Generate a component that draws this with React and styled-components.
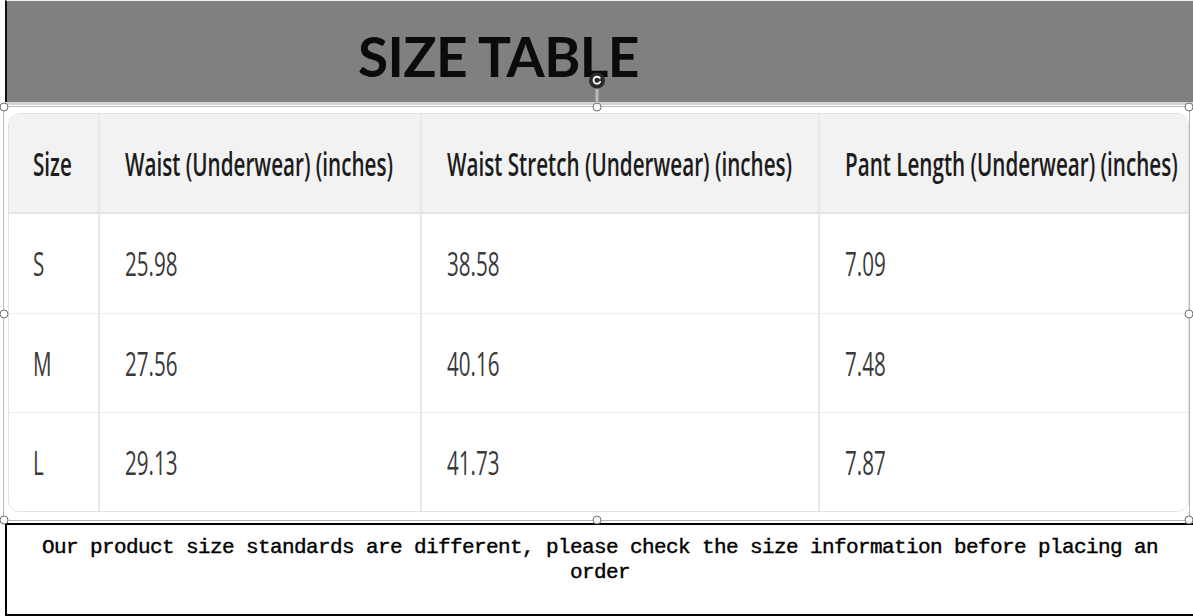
import React from 'react';
import styled, { createGlobalStyle } from 'styled-components';

const GlobalStyle = createGlobalStyle`
    html, body{
        margin: 0;
        padding: 0;
        background: #fff;
    }
    body{
        width: 1193px;
        height: 616px;
        overflow: hidden;
    }
`;

const Sheet = styled.div`
    width: 1193px;
    height: 616px;
    display: flex;
    flex-direction: column;
    background: #fff;
    overflow: hidden;
`;

const TitleBand = styled.div`
    margin-left: 5px;
    height: 102px;
    box-sizing: border-box;
    background: #808080;
    border-left: 2px solid #111;
    border-top: 1px solid #f2f2f2;
    display: flex;
    align-items: center;
    padding: 8px 0 0 351px;

    h1{
        margin: 0;
        font-family: Lato, "Noto Sans", sans-serif;
        font-weight: 700;
        font-size: 55px;
        letter-spacing: -0.6px;
        color: #0b0b0b;
        white-space: nowrap;
    }
`;

const BandEdge = styled.div`
    margin-left: 5px;
    height: 3px;
    background: #d4d4d4;
`;

const Frame = styled.div`
    position: relative;
    margin: 1px 0 0 3px;
    width: 1187px;
    height: 415px;
    box-sizing: border-box;
    border: 1px solid #b8b8b8;
    padding: 6px 0 0 4px;
`;

const Card = styled.div`
    border: 1px solid #e2e2e2;
    border-radius: 12px;
    overflow: hidden;
    background: #fff;
`;

const Row = styled.div`
    display: grid;
    grid-template-columns: 89px 322px 398px 1fr;
    height: ${p => p.$h}px;
    box-sizing: border-box;
    background: ${p => p.$head ? '#f2f2f2' : '#fff'};
    border-bottom: ${p => p.$last ? 'none' : p.$head ? '2px solid #e4e4e4' : '1px solid #ececec'};
`;

const Cell = styled.div`
    display: flex;
    align-items: center;
    padding-left: ${p => p.$first ? 24 : 25}px;
    border-left: ${p => p.$first ? 'none' : '2px solid #e8e8e8'};
    overflow: visible;

    span{
        display: inline-block;
        white-space: nowrap;
        transform: scaleX(0.625);
        transform-origin: left center;
        font-family: "Open Sans", "Liberation Sans", sans-serif;
        font-size: 33px;
        font-weight: ${p => p.$head ? 600 : 400};
        color: ${p => p.$head ? '#1c1c1c' : '#3a3a3a'};
    }
`;

const Handle = styled.span`
    position: absolute;
    left: ${p => p.$x};
    top: ${p => p.$y};
    width: 9px;
    height: 9px;
    box-sizing: border-box;
    border-radius: 50%;
    background: #fff;
    border: 1px solid #6f6f6f;
    transform: translate(-50%, -50%);
`;

const RotateHandle = styled.div`
    position: absolute;
    left: 50%;
    top: -35px;
    transform: translateX(-50%);
    display: flex;
    flex-direction: column;
    align-items: center;

    i{
        display: block;
        width: 3px;
        height: 13px;
        box-sizing: border-box;
        background: #fff;
        border-left: 1px solid #777;
        border-right: 1px solid #777;
    }
`;

const NoteBox = styled.div`
    margin: 2px 0 0 5px;
    height: 93px;
    box-sizing: border-box;
    border: 2px solid #000;
    border-right: none;
    padding: 10px 30px 0;
    text-align: center;
    font-family: "Liberation Mono", monospace;
    font-weight: 400;
    font-size: 21px;
    letter-spacing: -0.6px;
    line-height: 25px;
    color: #000;
    -webkit-text-stroke: 0.4px #000;
`;

const columns = [
    'Size',
    'Waist (Underwear) (inches)',
    'Waist Stretch (Underwear) (inches)',
    'Pant Length (Underwear) (inches)',
];

const sizes = [
    ['S', '25.98', '38.58', '7.09'],
    ['M', '27.56', '40.16', '7.48'],
    ['L', '29.13', '41.73', '7.87'],
];

const rowHeights = [100, 99, 98];

const handles = [
    ['0%', '0%'], ['50%', '0%'], ['100%', '0%'],
    ['0%', '50%'], ['100%', '50%'],
    ['0%', '100%'], ['50%', '100%'], ['100%', '100%'],
];

const App = () => {
    return(
        <Sheet>
            <GlobalStyle />
            <TitleBand>
                <h1>SIZE TABLE</h1>
            </TitleBand>
            <BandEdge />

            <Frame>
                <Card>
                    <Row $head $h={100}>
                        {columns.map((c, i) => (
                            <Cell key={c} $head $first={i === 0}><span>{c}</span></Cell>
                        ))}
                    </Row>
                    {sizes.map((r, ri) => (
                        <Row key={r[0]} $h={rowHeights[ri]} $last={ri === sizes.length - 1}>
                            {r.map((v, i) => (
                                <Cell key={i} $first={i === 0}><span>{v}</span></Cell>
                            ))}
                        </Row>
                    ))}
                </Card>

                {handles.map(([x, y]) => (
                    <Handle key={x + y} $x={x} $y={y} />
                ))}
                <RotateHandle>
                    <svg width="17" height="17" viewBox="0 0 16 16">
                        <circle cx="8" cy="8" r="7.5" fill="#2a2a2a" />
                        <path d="M11.2 8.6 A3.3 3.3 0 1 1 10.3 5.4" fill="none" stroke="#fff" strokeWidth="1.7" />
                        <path d="M8.6 4.2 L11.4 4.6 L11 7.3 Z" fill="#fff" />
                    </svg>
                    <i />
                </RotateHandle>
            </Frame>

            <NoteBox>
                Our product size standards are different, please check the size information before placing an order
            </NoteBox>
        </Sheet>
    );
};

export default App;
